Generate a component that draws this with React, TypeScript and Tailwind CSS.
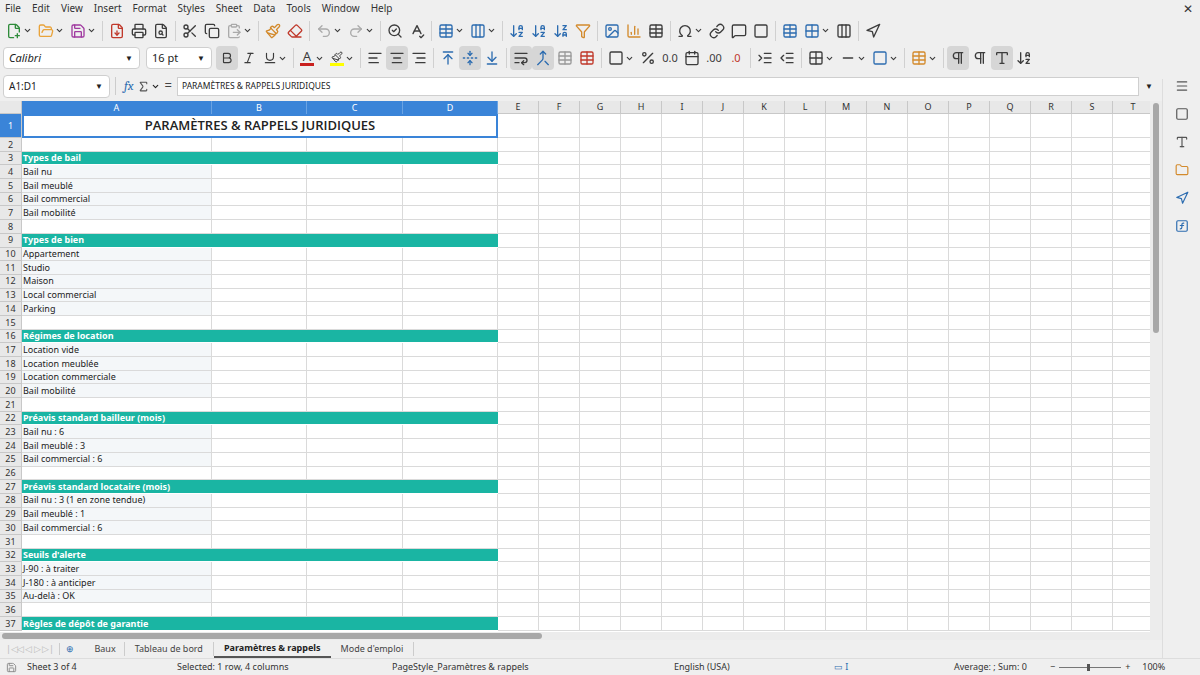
import React from 'react';
import {
  FilePlus2, FolderOpen, Save, FileDown, Printer, FileSearch, Scissors, Copy, ClipboardPaste, Paintbrush, Eraser,
  Undo2, Redo2, SearchCheck, SpellCheck, Table, Columns3, ArrowDownAZ, ArrowDownZA, Filter, Image, BarChart3,
  Omega, Link, MessageSquare, ChevronDown, Sigma, Bold, Italic, Underline, AlignLeft, AlignCenter, AlignRight,
  ArrowUpToLine, FoldVertical, ArrowDownToLine, WrapText, Merge, Percent, Calendar, IndentIncrease, IndentDecrease,
  Grid2x2, Minus, Square, Pilcrow, Menu, Type, Navigation, FunctionSquare, Folder,
} from 'lucide-react';

const font = { fontFamily: '"Noto Sans", "Open Sans", sans-serif' };

type Row = { n: number; text?: string; kind?: 'head' | 'item' | 'title' };

const rows: Row[] = [
  { n: 1, kind: 'title', text: 'PARAMÈTRES & RAPPELS JURIDIQUES' },
  { n: 2 },
  { n: 3, kind: 'head', text: 'Types de bail' },
  { n: 4, kind: 'item', text: 'Bail nu' },
  { n: 5, kind: 'item', text: 'Bail meublé' },
  { n: 6, kind: 'item', text: 'Bail commercial' },
  { n: 7, kind: 'item', text: 'Bail mobilité' },
  { n: 8 },
  { n: 9, kind: 'head', text: 'Types de bien' },
  { n: 10, kind: 'item', text: 'Appartement' },
  { n: 11, kind: 'item', text: 'Studio' },
  { n: 12, kind: 'item', text: 'Maison' },
  { n: 13, kind: 'item', text: 'Local commercial' },
  { n: 14, kind: 'item', text: 'Parking' },
  { n: 15 },
  { n: 16, kind: 'head', text: 'Régimes de location' },
  { n: 17, kind: 'item', text: 'Location vide' },
  { n: 18, kind: 'item', text: 'Location meublée' },
  { n: 19, kind: 'item', text: 'Location commerciale' },
  { n: 20, kind: 'item', text: 'Bail mobilité' },
  { n: 21 },
  { n: 22, kind: 'head', text: 'Préavis standard bailleur (mois)' },
  { n: 23, kind: 'item', text: 'Bail nu : 6' },
  { n: 24, kind: 'item', text: 'Bail meublé : 3' },
  { n: 25, kind: 'item', text: 'Bail commercial : 6' },
  { n: 26 },
  { n: 27, kind: 'head', text: 'Préavis standard locataire (mois)' },
  { n: 28, kind: 'item', text: 'Bail nu : 3 (1 en zone tendue)' },
  { n: 29, kind: 'item', text: 'Bail meublé : 1' },
  { n: 30, kind: 'item', text: 'Bail commercial : 6' },
  { n: 31 },
  { n: 32, kind: 'head', text: "Seuils d'alerte" },
  { n: 33, kind: 'item', text: 'J-90 : à traiter' },
  { n: 34, kind: 'item', text: 'J-180 : à anticiper' },
  { n: 35, kind: 'item', text: 'Au-delà : OK' },
  { n: 36 },
  { n: 37, kind: 'head', text: 'Règles de dépôt de garantie' },
];

const extraCols = ['E', 'F', 'G', 'H', 'I', 'J', 'K', 'L', 'M', 'N', 'O', 'P', 'Q', 'R', 'S', 'T'];

function Btn({ children, active }: { children: React.ReactNode; active?: boolean }) {
  return (
    <div className={`h-[24px] min-w-[22px] px-[3px] flex items-center justify-center rounded-sm text-[#3c3c3c] ${active ? 'bg-[#d6d6d6]' : ''}`}>
      {children}
    </div>
  );
}

const Sep = () => <div className="w-px h-[20px] bg-[#d0d0d0] mx-[3px]" />;
const Dd = () => <ChevronDown className="w-[9px] h-[9px] ml-[1px]" strokeWidth={3} />;

export default function App() {
  const ic = 'w-[16px] h-[16px]';
  return (
    <div className="w-[1200px] h-[675px] bg-[#efefef] flex flex-col overflow-hidden text-[#222]" style={font}>
      {/* menu */}
      <div className="h-[17px] flex items-center gap-[11px] px-[5px] text-[10px] text-[#333]">
        {['File', 'Edit', 'View', 'Insert', 'Format', 'Styles', 'Sheet', 'Data', 'Tools', 'Window', 'Help'].map(m => <span key={m}>{m}</span>)}
        <span className="ml-auto mr-[2px] text-[12px]">✕</span>
      </div>
      {/* toolbar 1 */}
      <div className="h-[27px] flex items-center px-[3px]">
        <Btn><FilePlus2 className={`${ic} text-[#2e8b3a]`} /><Dd /></Btn>
        <Btn><FolderOpen className={`${ic} text-[#e9a33a]`} /><Dd /></Btn>
        <Btn><Save className={`${ic} text-[#a03aa0]`} /><Dd /></Btn>
        <Sep />
        <Btn><FileDown className={`${ic} text-[#c0392b]`} /></Btn>
        <Btn><Printer className={ic} /></Btn>
        <Btn><FileSearch className={ic} /></Btn>
        <Sep />
        <Btn><Scissors className={ic} /></Btn>
        <Btn><Copy className={ic} /></Btn>
        <Btn><ClipboardPaste className={`${ic} text-[#aaa]`} /><Dd /></Btn>
        <Sep />
        <Btn><Paintbrush className={`${ic} text-[#d38a2c]`} /></Btn>
        <Btn><Eraser className={`${ic} text-[#c0392b]`} /></Btn>
        <Sep />
        <Btn><Undo2 className={`${ic} text-[#aaa]`} /><Dd /></Btn>
        <Btn><Redo2 className={`${ic} text-[#aaa]`} /><Dd /></Btn>
        <Sep />
        <Btn><SearchCheck className={ic} /></Btn>
        <Btn><SpellCheck className={ic} /></Btn>
        <Sep />
        <Btn><Table className={`${ic} text-[#2c6cb0]`} /><Dd /></Btn>
        <Btn><Columns3 className={`${ic} text-[#2c6cb0]`} /><Dd /></Btn>
        <Sep />
        <Btn><ArrowDownAZ className={`${ic} text-[#2c6cb0]`} /></Btn>
        <Btn><ArrowDownAZ className={`${ic} text-[#2c6cb0]`} /></Btn>
        <Btn><ArrowDownZA className={`${ic} text-[#2c6cb0]`} /></Btn>
        <Btn><Filter className={`${ic} text-[#d38a2c]`} /></Btn>
        <Sep />
        <Btn><Image className={`${ic} text-[#2c6cb0]`} /></Btn>
        <Btn><BarChart3 className={`${ic} text-[#d38a2c]`} /></Btn>
        <Btn><Table className={ic} /></Btn>
        <Sep />
        <Btn><Omega className={ic} /><Dd /></Btn>
        <Btn><Link className={ic} /></Btn>
        <Btn><MessageSquare className={ic} /></Btn>
        <Btn><Square className={ic} /></Btn>
        <Sep />
        <Btn><Table className={`${ic} text-[#2c6cb0]`} /></Btn>
        <Btn><Grid2x2 className={`${ic} text-[#2c6cb0]`} /><Dd /></Btn>
        <Btn><Columns3 className={ic} /></Btn>
        <Sep />
        <Btn><Navigation className={ic} /></Btn>
      </div>
      {/* toolbar 2 */}
      <div className="h-[28px] flex items-center px-[3px]">
        <div className="w-[137px] h-[22px] bg-white border border-[#cfcfcf] rounded-sm flex items-center text-[11px] italic pl-[5px]">
          <span className="flex-1">Calibri</span>
          <div className="w-[20px] flex justify-center not-italic"><span className="text-[8px]">▼</span></div>
        </div>
        <div className="w-[66px] h-[22px] ml-[6px] bg-white border border-[#cfcfcf] rounded-sm flex items-center text-[11px] pl-[5px]">
          <span className="flex-1">16 pt</span>
          <div className="w-[20px] flex justify-center"><span className="text-[8px]">▼</span></div>
        </div>
        <div className="w-[4px]" />
        <Btn active><Bold className="w-[14px] h-[14px]" /></Btn>
        <Btn><Italic className="w-[14px] h-[14px]" /></Btn>
        <Btn><Underline className="w-[14px] h-[14px]" /><Dd /></Btn>
        <Sep />
        <Btn><span className="flex flex-col items-center leading-none"><span className="text-[13px]">A</span><span className="w-[14px] h-[3px] bg-[#c9211e]" /></span><Dd /></Btn>
        <Btn><span className="flex flex-col items-center leading-none"><Paintbrush className="w-[12px] h-[12px]" /><span className="w-[14px] h-[3px] bg-[#ffff00]" /></span><Dd /></Btn>
        <Sep />
        <Btn><AlignLeft className={ic} /></Btn>
        <Btn active><AlignCenter className={ic} /></Btn>
        <Btn><AlignRight className={ic} /></Btn>
        <Sep />
        <Btn><ArrowUpToLine className={`${ic} text-[#2c6cb0]`} /></Btn>
        <Btn active><FoldVertical className={`${ic} text-[#2c6cb0]`} /></Btn>
        <Btn><ArrowDownToLine className={`${ic} text-[#2c6cb0]`} /></Btn>
        <Sep />
        <Btn active><WrapText className={ic} /></Btn>
        <Btn active><Merge className={`${ic} text-[#2c6cb0]`} /></Btn>
        <Btn><Table className={`${ic} text-[#999]`} /></Btn>
        <Btn><Table className={`${ic} text-[#c0392b]`} /></Btn>
        <Sep />
        <Btn><Square className={ic} /><Dd /></Btn>
        <Btn><Percent className={ic} /></Btn>
        <Btn><span className="text-[11px]">0.0</span></Btn>
        <Btn><Calendar className={ic} /></Btn>
        <Btn><span className="text-[11px]">.00</span></Btn>
        <Btn><span className="text-[11px] text-[#c0392b]">.0</span></Btn>
        <Sep />
        <Btn><IndentIncrease className={ic} /></Btn>
        <Btn><IndentDecrease className={ic} /></Btn>
        <Sep />
        <Btn><Grid2x2 className={ic} /><Dd /></Btn>
        <Btn><Minus className={ic} /><Dd /></Btn>
        <Btn><Square className={`${ic} text-[#2c6cb0]`} /><Dd /></Btn>
        <Sep />
        <Btn><Table className={`${ic} text-[#d38a2c]`} /><Dd /></Btn>
        <Sep />
        <Btn active><Pilcrow className={ic} /></Btn>
        <Btn><Pilcrow className={ic} /></Btn>
        <Btn active><Type className={ic} /></Btn>
        <Btn><ArrowDownAZ className={ic} /></Btn>
      </div>
      {/* formula bar */}
      <div className="h-[26px] flex items-center px-[3px] pt-[2px]">
        <div className="w-[107px] h-[23px] bg-white border border-[#cfcfcf] rounded-sm flex items-center text-[10px] pl-[5px]">
          <span className="flex-1">A1:D1</span>
          <div className="w-[20px] flex justify-center"><span className="text-[8px]">▼</span></div>
        </div>
        <div className="w-px h-[18px] bg-[#ccc] mx-[5px]" />
        <span className="text-[#2c6cb0] italic text-[13px] font-serif mx-[3px]">fx</span>
        <Sigma className="w-[13px] h-[13px] text-[#555]" /><Dd />
        <span className="mx-[5px] text-[13px] text-[#444]">=</span>
        <div className="flex-1 h-[19px] bg-white border border-[#cfcfcf] text-[8.5px] flex items-center pl-[4px]">PARAMÈTRES &amp; RAPPELS JURIDIQUES</div>
        <div className="w-[20px] flex justify-center"><span className="text-[8px]">▼</span></div>
        <div className="w-[38px]" />
      </div>
      {/* main */}
      <div className="flex flex-1 min-h-0 mt-[3px]">
        <div className="flex flex-col w-[1162px]">
          <div className="flex-1 min-h-0 flex">
            <div className="flex-1 bg-white overflow-hidden text-[9px]">
              {/* column header */}
              <div className="flex h-[13px] text-[9px] text-[#333]">
                <div className="w-[22px] shrink-0 bg-[#e8e8e8] border-r border-b border-[#c8c8c8]" />
                {[['A', 190], ['B', 95], ['C', 96], ['D', 95]].map(([c, w]) => (
                  <div key={c as string} style={{ width: w as number }} className="bg-[#3a84d8] text-white flex items-center justify-center border-r border-[#6aa3e3] shrink-0">{c}</div>
                ))}
                {extraCols.map(c => (
                  <div key={c} className="w-[41px] shrink-0 bg-[#e8e8e8] border-r border-b border-[#c8c8c8] flex items-center justify-center">{c}</div>
                ))}
              </div>
              {rows.map(r => {
                const h = r.n === 1 ? 'h-[24px]' : 'h-[13.7px]';
                return (
                  <div key={r.n} className={`flex ${h}`}>
                    <div className={`w-[22px] shrink-0 flex items-center justify-center border-r border-b border-[#c8c8c8] ${r.n === 1 ? 'bg-[#3a84d8] text-white' : 'bg-[#e8e8e8] text-[#333]'}`}>{r.n}</div>
                    {r.kind === 'title' ? (
                      <div className="w-[476px] shrink-0 border-2 border-[#3a84d8] flex items-center justify-center text-[13px] text-[#222]" style={{ fontFamily: '"Open Sans", sans-serif', fontWeight: 600 }}>
                        PARAMÈTRES &amp; RAPPELS JURIDIQUES
                      </div>
                    ) : r.kind === 'head' ? (
                      <div className="w-[476px] shrink-0 bg-[#1ab5a3] text-white font-bold flex items-center pl-[1px] border-b border-white whitespace-nowrap">{r.text}</div>
                    ) : (
                      <>
                        <div className={`w-[190px] shrink-0 border-r border-b border-[#dadada] flex items-center pl-[1px] whitespace-nowrap ${r.kind === 'item' ? 'bg-[#f4f7f9]' : ''}`}>{r.text}</div>
                        <div className="w-[95px] shrink-0 border-r border-b border-[#dadada]" />
                        <div className="w-[96px] shrink-0 border-r border-b border-[#dadada]" />
                        <div className="w-[95px] shrink-0 border-r border-b border-[#dadada]" />
                      </>
                    )}
                    {extraCols.map(c => <div key={c} className="w-[41px] shrink-0 border-r border-b border-[#dadada]" />)}
                  </div>
                );
              })}
            </div>
            {/* vscroll */}
            <div className="w-[12px] bg-[#ececec] flex justify-center pt-[2px]">
              <div className="w-[6px] h-[230px] rounded bg-[#a8a8a8]" />
            </div>
          </div>
          {/* hscroll */}
          <div className="h-[8px] bg-[#ececec] flex items-center px-[2px]">
            <div className="w-[540px] h-[6px] rounded bg-[#a8a8a8]" />
          </div>
          {/* tabs */}
          <div className="h-[18px] flex items-center text-[9px] text-[#444]">
            <span className="ml-[6px] text-[#bbb] tracking-tighter">|◁◁ ◁ ▷ ▷|</span>
            <div className="w-px h-[12px] bg-[#ccc] mx-[6px]" />
            <span className="text-[#2c6cb0] mr-[12px]">⊕</span>
            <span className="px-[8px] border-r border-[#ccc]">Baux</span>
            <span className="px-[10px] border-r border-[#ccc]">Tableau de bord</span>
            <span className="px-[10px] font-bold text-[#222] border-b-2 border-[#555] h-full flex items-center">Paramètres &amp; rappels</span>
            <span className="px-[10px] border-r border-[#ccc]">Mode d'emploi</span>
          </div>
        </div>
        {/* sidebar */}
        <div className="w-[38px] -mt-[22px] flex flex-col items-center gap-[14px] text-[#555] border-l border-[#ddd]">
          <Menu className="w-[14px] h-[14px]" />
          <Square className="w-[14px] h-[14px]" />
          <Type className="w-[14px] h-[14px]" />
          <Folder className="w-[14px] h-[14px] text-[#d38a2c]" />
          <Navigation className="w-[14px] h-[14px] text-[#2c6cb0]" />
          <FunctionSquare className="w-[14px] h-[14px] text-[#2c6cb0]" />
        </div>
      </div>
      {/* status */}
      <div className="h-[17px] flex items-center text-[9px] text-[#333] border-t border-[#ddd]">
        <Save className="w-[11px] h-[11px] ml-[6px] text-[#888]" />
        <span className="ml-[10px] w-[150px]">Sheet 3 of 4</span>
        <span className="w-[215px]">Selected: 1 row, 4 columns</span>
        <span className="w-[282px]">PageStyle_Paramètres &amp; rappels</span>
        <span className="w-[160px]">English (USA)</span>
        <span className="w-[120px] text-[#2c6cb0]">▭ I</span>
        <span className="w-[96px]">Average: ; Sum: 0</span>
        <span className="mr-[4px]">−</span>
        <div className="w-[62px] h-px bg-[#777] relative"><div className="absolute left-[28px] -top-[3px] w-[3px] h-[7px] bg-[#555]" /></div>
        <span className="ml-[4px]">+</span>
        <span className="ml-[12px]">100%</span>
      </div>
    </div>
  );
}
